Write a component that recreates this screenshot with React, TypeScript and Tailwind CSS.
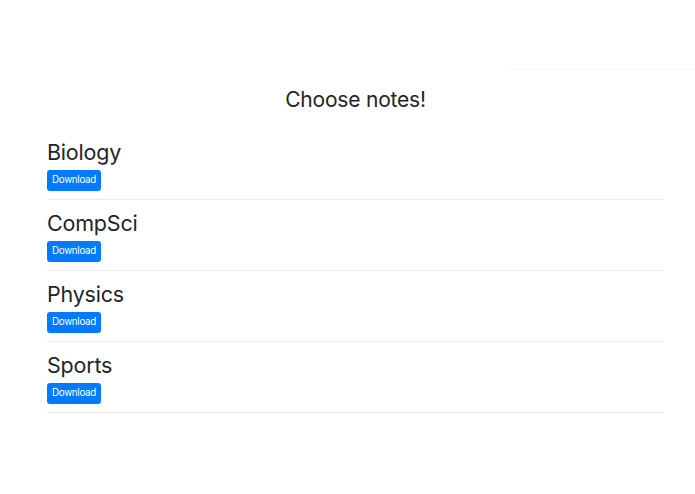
import React from "react";

const items = ["Biology", "CompSci", "Physics", "Sports"];

export default function App() {
  return (
    <div className="min-h-[494px] w-[695px] bg-white text-[#212529]" style={{ fontFamily: 'Inter, "Liberation Sans", Arial, sans-serif' }}>
      <div className="flex h-[70px] justify-end">
        <div className="h-full w-[185px] border-b border-[#f6f6f6]" />
      </div>
      <div className="ml-[47px] w-[617px]">
        <h1 className="mt-[17px] text-center text-[21px] leading-[1.2] font-normal tracking-[-0.2px]">Choose notes!</h1>
        <div className="mt-[27px]">
          {items.map((name, i) => (
            <div key={name} className={`border-b border-[#ececec] pb-[8px] ${i === 0 ? "" : "pt-[10px]"}`}>
              <h2 className="text-[21.5px] leading-[26px] font-normal tracking-[-0.2px]">{name}</h2>
              <button className="mt-[5px] flex h-[21px] w-[54px] items-center justify-center rounded-[3px] bg-[#007bff] text-[9.8px] tracking-[-0.3px] text-white">
                Download
              </button>
            </div>
          ))}
        </div>
      </div>
    </div>
  );
}
